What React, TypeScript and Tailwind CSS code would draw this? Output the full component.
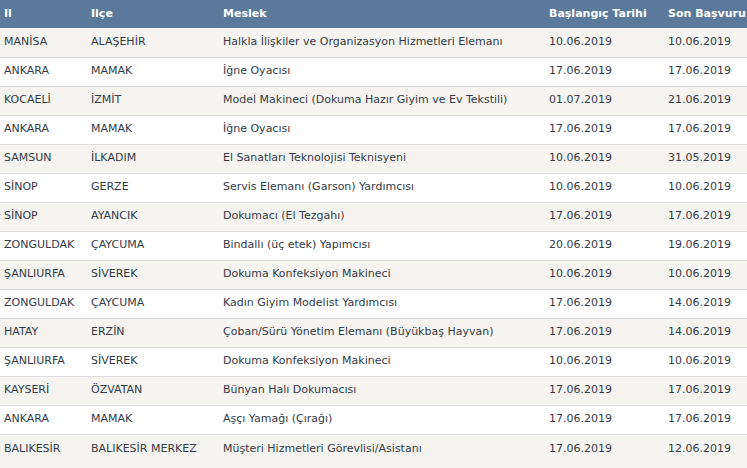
import React from 'react';

type Row = [string, string, string, string, string];

const rows: Row[] = [
  ['MANİSA', 'ALAŞEHİR', 'Halkla İlişkiler ve Organizasyon Hizmetleri Elemanı', '10.06.2019', '10.06.2019'],
  ['ANKARA', 'MAMAK', 'İğne Oyacısı', '17.06.2019', '17.06.2019'],
  ['KOCAELİ', 'İZMİT', 'Model Makineci (Dokuma Hazır Giyim ve Ev Tekstili)', '01.07.2019', '21.06.2019'],
  ['ANKARA', 'MAMAK', 'İğne Oyacısı', '17.06.2019', '17.06.2019'],
  ['SAMSUN', 'İLKADIM', 'El Sanatları Teknolojisi Teknisyeni', '10.06.2019', '31.05.2019'],
  ['SİNOP', 'GERZE', 'Servis Elemanı (Garson) Yardımcısı', '10.06.2019', '10.06.2019'],
  ['SİNOP', 'AYANCIK', 'Dokumacı (El Tezgahı)', '17.06.2019', '17.06.2019'],
  ['ZONGULDAK', 'ÇAYCUMA', 'Bindallı (üç etek) Yapımcısı', '20.06.2019', '19.06.2019'],
  ['ŞANLIURFA', 'SİVEREK', 'Dokuma Konfeksiyon Makineci', '10.06.2019', '10.06.2019'],
  ['ZONGULDAK', 'ÇAYCUMA', 'Kadın Giyim Modelist Yardımcısı', '17.06.2019', '14.06.2019'],
  ['HATAY', 'ERZİN', 'Çoban/Sürü Yönetim Elemanı (Büyükbaş Hayvan)', '17.06.2019', '14.06.2019'],
  ['ŞANLIURFA', 'SİVEREK', 'Dokuma Konfeksiyon Makineci', '10.06.2019', '10.06.2019'],
  ['KAYSERİ', 'ÖZVATAN', 'Bünyan Halı Dokumacısı', '17.06.2019', '17.06.2019'],
  ['ANKARA', 'MAMAK', 'Aşçı Yamağı (Çırağı)', '17.06.2019', '17.06.2019'],
  ['BALIKESİR', 'BALIKESİR MERKEZ', 'Müşteri Hizmetleri Görevlisi/Asistanı', '17.06.2019', '12.06.2019'],
];

const Ornament = () => (
  <svg width="747" height="24" viewBox="0 0 747 24" className="block">
    {Array.from({ length: 9 }).map((_, i) => (
      <g key={i} fill="none" stroke="#e9e5dd" strokeWidth="1.5">
        <path d={`M${i * 90 - 10} 24 Q${i * 90 + 35} -6 ${i * 90 + 80} 24`} />
        <path d={`M${i * 90 + 20} 24 Q${i * 90 + 45} 6 ${i * 90 + 70} 24`} />
      </g>
    ))}
  </svg>
);

export default function App() {
  return (
    <div className="h-[468px] w-[747px] overflow-hidden bg-[#f5f4f0] font-['DejaVu_Sans','Verdana',sans-serif] text-[11px] text-[#333b48]">
      <table className="w-[800px] table-fixed border-collapse">
        <colgroup>
          <col className="w-[87px]" />
          <col className="w-[132px]" />
          <col className="w-[326px]" />
          <col className="w-[119px]" />
          <col className="w-[136px]" />
        </colgroup>
        <thead>
          <tr className="h-[28px] bg-[#5b7a9b] text-left font-bold text-white">
            <th className="whitespace-nowrap pl-1 font-bold">Il</th>
            <th className="whitespace-nowrap pl-1 font-bold">Ilçe</th>
            <th className="whitespace-nowrap pl-1 font-bold">Meslek</th>
            <th className="whitespace-nowrap pl-1 font-bold">Başlangıç Tarihi</th>
            <th className="whitespace-nowrap pl-1 font-bold">Son Başvuru Tarihi</th>
          </tr>
        </thead>
        <tbody>
          {rows.map((r, i) => (
            <tr
              key={i}
              className={`h-[29px] ${i % 2 === 0 ? 'bg-[#f5f4f0]' : 'bg-white'} ${
                i < rows.length - 1 ? 'border-b border-[#dcdcdc]' : ''
              }`}
            >
              {r.map((c, j) => (
                <td key={j} className="whitespace-nowrap pl-1 align-middle">
                  {c}
                </td>
              ))}
            </tr>
          ))}
        </tbody>
      </table>
      <Ornament />
    </div>
  );
}
